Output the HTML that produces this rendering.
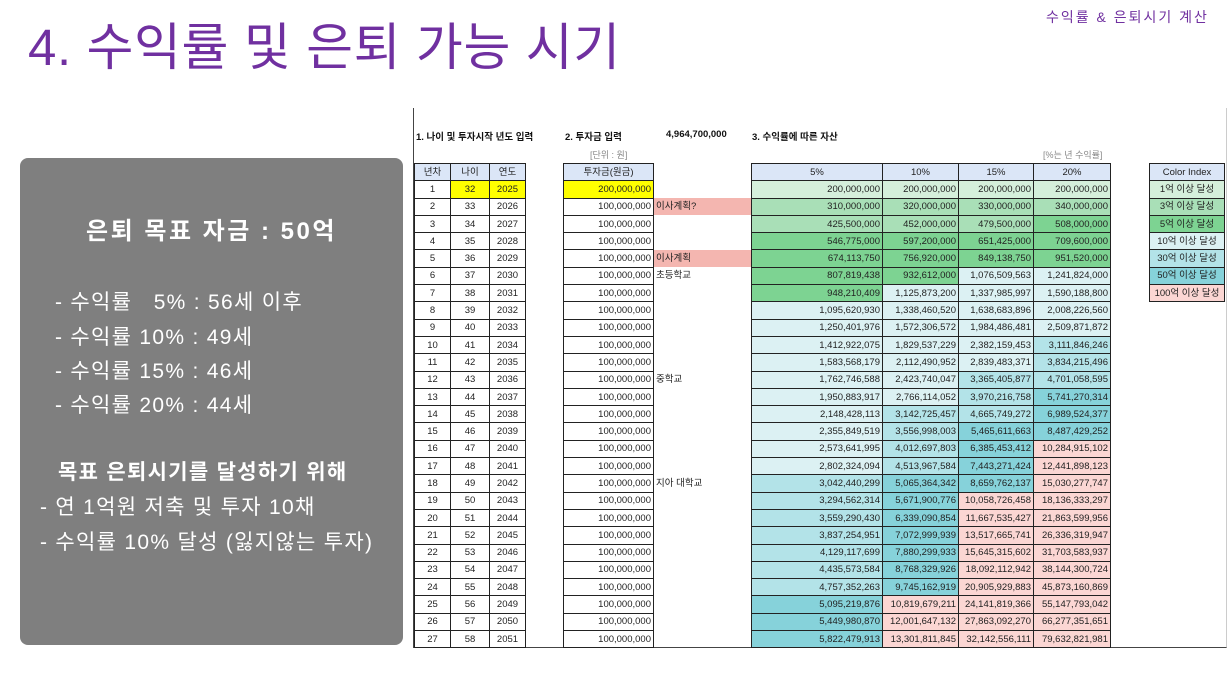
<!DOCTYPE html>
<html><head><meta charset="utf-8"><style>
*{margin:0;padding:0;box-sizing:border-box}
body{width:1228px;height:686px;background:#fff;position:relative;overflow:hidden;font-family:"Liberation Sans","Noto Sans CJK KR",sans-serif}
.t{position:absolute;white-space:nowrap}
#title{left:28px;top:15px;font-size:51px;color:#7030a0;letter-spacing:0.6px;line-height:66px}
#sub{left:1046px;top:7px;font-size:14px;color:#7030a0;letter-spacing:2px}
#box{position:absolute;left:20px;top:158px;width:383px;height:487px;background:#7f7f7f;border-radius:8px;color:#fff}
#box .t{font-size:21px;line-height:26px;letter-spacing:1.3px}
#sheet{position:absolute;left:413px;top:108px;width:814px;height:540px;border:1px solid #444;border-top:none;border-right:1px solid #ccc}
.sm{font-size:9.5px;font-weight:bold;color:#111}
.gr{font-size:9px;color:#888}
table{border-collapse:collapse;table-layout:fixed;position:absolute;font-size:9.5px;color:#222}
td{height:17.3px;border:1px solid #222;padding:0 2px;text-align:right;line-height:15px;overflow:hidden;white-space:nowrap}
td.c{text-align:center}
td.n{border:none;text-align:left}
td.x{border:none}
tr.h td{background:#dbe6f7;text-align:center}
.y{background:#ffff00}
.p{background:#f4b6b0}
.a{background:#d5efdb}.b{background:#a9dfb7}.c2{background:#7dd392}.d{background:#dcf1f3}.e{background:#b3e3e8}.f{background:#86d2da}.g{background:#fbd6d3}
#ci td{text-align:center}
</style></head><body>
<div class="t" id="title">4. 수익률 및 은퇴 가능 시기</div>
<div class="t" id="sub">수익률 &amp; 은퇴시기 계산</div>
<div id="box">
<div class="t" style="left:0;width:383px;text-align:center;top:60px;font-size:24px!important;font-weight:bold;line-height:28px;letter-spacing:2.5px!important">은퇴 목표 자금 : 50억</div>
<div class="t" style="left:35px;top:132px">- 수익률 &nbsp;&nbsp;5% : 56세 이후</div>
<div class="t" style="left:35px;top:167px">- 수익률 10% : 49세</div>
<div class="t" style="left:35px;top:201px">- 수익률 15% : 46세</div>
<div class="t" style="left:35px;top:235px">- 수익률 20% : 44세</div>
<div class="t" style="left:38px;top:302px;font-weight:bold">목표 은퇴시기를 달성하기 위해</div>
<div class="t" style="left:20px;top:337px">- 연 1억원 저축 및 투자 10채</div>
<div class="t" style="left:20px;top:372px">- 수익률 10% 달성 (잃지않는 투자)</div>
</div>
<div id="sheet"></div>
<div class="t sm" style="left:416px;top:129px">1. 나이 및 투자시작 년도 입력</div>
<div class="t sm" style="left:565px;top:129px">2. 투자금 입력</div>
<div class="t sm" style="left:666px;top:129px">4,964,700,000</div>
<div class="t sm" style="left:752px;top:129px">3. 수익률에 따른 자산</div>
<div class="t gr" style="left:590px;top:148px">[단위 : 원]</div>
<div class="t gr" style="left:1043px;top:148px">[%는 년 수익률]</div>
<table style="left:414px;top:163px;width:696px">
<colgroup><col style="width:36px"><col style="width:39px"><col style="width:36px"><col style="width:38px"><col style="width:90px"><col style="width:98px"><col style="width:131px"><col style="width:76px"><col style="width:75px"><col style="width:77px"></colgroup>
<tr class="h"><td>년차</td><td>나이</td><td>연도</td><td class="x" style="background:none"></td><td>투자금(원금)</td><td class="x" style="background:none"></td><td>5%</td><td>10%</td><td>15%</td><td>20%</td></tr>
<tr><td class="c">1</td><td class="c y">32</td><td class="c y">2025</td><td class="x"></td><td class="y">200,000,000</td><td class="n"></td><td class="a">200,000,000</td><td class="a">200,000,000</td><td class="a">200,000,000</td><td class="a">200,000,000</td></tr>
<tr><td class="c">2</td><td class="c">33</td><td class="c">2026</td><td class="x"></td><td>100,000,000</td><td class="n p">이사계획?</td><td class="b">310,000,000</td><td class="b">320,000,000</td><td class="b">330,000,000</td><td class="b">340,000,000</td></tr>
<tr><td class="c">3</td><td class="c">34</td><td class="c">2027</td><td class="x"></td><td>100,000,000</td><td class="n"></td><td class="b">425,500,000</td><td class="b">452,000,000</td><td class="b">479,500,000</td><td class="c2">508,000,000</td></tr>
<tr><td class="c">4</td><td class="c">35</td><td class="c">2028</td><td class="x"></td><td>100,000,000</td><td class="n"></td><td class="c2">546,775,000</td><td class="c2">597,200,000</td><td class="c2">651,425,000</td><td class="c2">709,600,000</td></tr>
<tr><td class="c">5</td><td class="c">36</td><td class="c">2029</td><td class="x"></td><td>100,000,000</td><td class="n p">이사계획</td><td class="c2">674,113,750</td><td class="c2">756,920,000</td><td class="c2">849,138,750</td><td class="c2">951,520,000</td></tr>
<tr><td class="c">6</td><td class="c">37</td><td class="c">2030</td><td class="x"></td><td>100,000,000</td><td class="n">초등학교</td><td class="c2">807,819,438</td><td class="c2">932,612,000</td><td class="d">1,076,509,563</td><td class="d">1,241,824,000</td></tr>
<tr><td class="c">7</td><td class="c">38</td><td class="c">2031</td><td class="x"></td><td>100,000,000</td><td class="n"></td><td class="c2">948,210,409</td><td class="d">1,125,873,200</td><td class="d">1,337,985,997</td><td class="d">1,590,188,800</td></tr>
<tr><td class="c">8</td><td class="c">39</td><td class="c">2032</td><td class="x"></td><td>100,000,000</td><td class="n"></td><td class="d">1,095,620,930</td><td class="d">1,338,460,520</td><td class="d">1,638,683,896</td><td class="d">2,008,226,560</td></tr>
<tr><td class="c">9</td><td class="c">40</td><td class="c">2033</td><td class="x"></td><td>100,000,000</td><td class="n"></td><td class="d">1,250,401,976</td><td class="d">1,572,306,572</td><td class="d">1,984,486,481</td><td class="d">2,509,871,872</td></tr>
<tr><td class="c">10</td><td class="c">41</td><td class="c">2034</td><td class="x"></td><td>100,000,000</td><td class="n"></td><td class="d">1,412,922,075</td><td class="d">1,829,537,229</td><td class="d">2,382,159,453</td><td class="e">3,111,846,246</td></tr>
<tr><td class="c">11</td><td class="c">42</td><td class="c">2035</td><td class="x"></td><td>100,000,000</td><td class="n"></td><td class="d">1,583,568,179</td><td class="d">2,112,490,952</td><td class="d">2,839,483,371</td><td class="e">3,834,215,496</td></tr>
<tr><td class="c">12</td><td class="c">43</td><td class="c">2036</td><td class="x"></td><td>100,000,000</td><td class="n">중학교</td><td class="d">1,762,746,588</td><td class="d">2,423,740,047</td><td class="e">3,365,405,877</td><td class="e">4,701,058,595</td></tr>
<tr><td class="c">13</td><td class="c">44</td><td class="c">2037</td><td class="x"></td><td>100,000,000</td><td class="n"></td><td class="d">1,950,883,917</td><td class="d">2,766,114,052</td><td class="e">3,970,216,758</td><td class="f">5,741,270,314</td></tr>
<tr><td class="c">14</td><td class="c">45</td><td class="c">2038</td><td class="x"></td><td>100,000,000</td><td class="n"></td><td class="d">2,148,428,113</td><td class="e">3,142,725,457</td><td class="e">4,665,749,272</td><td class="f">6,989,524,377</td></tr>
<tr><td class="c">15</td><td class="c">46</td><td class="c">2039</td><td class="x"></td><td>100,000,000</td><td class="n"></td><td class="d">2,355,849,519</td><td class="e">3,556,998,003</td><td class="f">5,465,611,663</td><td class="f">8,487,429,252</td></tr>
<tr><td class="c">16</td><td class="c">47</td><td class="c">2040</td><td class="x"></td><td>100,000,000</td><td class="n"></td><td class="d">2,573,641,995</td><td class="e">4,012,697,803</td><td class="f">6,385,453,412</td><td class="g">10,284,915,102</td></tr>
<tr><td class="c">17</td><td class="c">48</td><td class="c">2041</td><td class="x"></td><td>100,000,000</td><td class="n"></td><td class="d">2,802,324,094</td><td class="e">4,513,967,584</td><td class="f">7,443,271,424</td><td class="g">12,441,898,123</td></tr>
<tr><td class="c">18</td><td class="c">49</td><td class="c">2042</td><td class="x"></td><td>100,000,000</td><td class="n">지아 대학교</td><td class="e">3,042,440,299</td><td class="f">5,065,364,342</td><td class="f">8,659,762,137</td><td class="g">15,030,277,747</td></tr>
<tr><td class="c">19</td><td class="c">50</td><td class="c">2043</td><td class="x"></td><td>100,000,000</td><td class="n"></td><td class="e">3,294,562,314</td><td class="f">5,671,900,776</td><td class="g">10,058,726,458</td><td class="g">18,136,333,297</td></tr>
<tr><td class="c">20</td><td class="c">51</td><td class="c">2044</td><td class="x"></td><td>100,000,000</td><td class="n"></td><td class="e">3,559,290,430</td><td class="f">6,339,090,854</td><td class="g">11,667,535,427</td><td class="g">21,863,599,956</td></tr>
<tr><td class="c">21</td><td class="c">52</td><td class="c">2045</td><td class="x"></td><td>100,000,000</td><td class="n"></td><td class="e">3,837,254,951</td><td class="f">7,072,999,939</td><td class="g">13,517,665,741</td><td class="g">26,336,319,947</td></tr>
<tr><td class="c">22</td><td class="c">53</td><td class="c">2046</td><td class="x"></td><td>100,000,000</td><td class="n"></td><td class="e">4,129,117,699</td><td class="f">7,880,299,933</td><td class="g">15,645,315,602</td><td class="g">31,703,583,937</td></tr>
<tr><td class="c">23</td><td class="c">54</td><td class="c">2047</td><td class="x"></td><td>100,000,000</td><td class="n"></td><td class="e">4,435,573,584</td><td class="f">8,768,329,926</td><td class="g">18,092,112,942</td><td class="g">38,144,300,724</td></tr>
<tr><td class="c">24</td><td class="c">55</td><td class="c">2048</td><td class="x"></td><td>100,000,000</td><td class="n"></td><td class="e">4,757,352,263</td><td class="f">9,745,162,919</td><td class="g">20,905,929,883</td><td class="g">45,873,160,869</td></tr>
<tr><td class="c">25</td><td class="c">56</td><td class="c">2049</td><td class="x"></td><td>100,000,000</td><td class="n"></td><td class="f">5,095,219,876</td><td class="g">10,819,679,211</td><td class="g">24,141,819,366</td><td class="g">55,147,793,042</td></tr>
<tr><td class="c">26</td><td class="c">57</td><td class="c">2050</td><td class="x"></td><td>100,000,000</td><td class="n"></td><td class="f">5,449,980,870</td><td class="g">12,001,647,132</td><td class="g">27,863,092,270</td><td class="g">66,277,351,651</td></tr>
<tr><td class="c">27</td><td class="c">58</td><td class="c">2051</td><td class="x"></td><td>100,000,000</td><td class="n"></td><td class="f">5,822,479,913</td><td class="g">13,301,811,845</td><td class="g">32,142,556,111</td><td class="g">79,632,821,981</td></tr>
</table>
<table id="ci" style="left:1149px;top:163px;width:76px">
<tr class="h"><td>Color Index</td></tr>
<tr><td class="a">1억 이상 달성</td></tr>
<tr><td class="b">3억 이상 달성</td></tr>
<tr><td class="c2">5억 이상 달성</td></tr>
<tr><td class="d">10억 이상 달성</td></tr>
<tr><td class="e">30억 이상 달성</td></tr>
<tr><td class="f">50억 이상 달성</td></tr>
<tr><td class="g">100억 이상 달성</td></tr>
</table>
</body></html>
